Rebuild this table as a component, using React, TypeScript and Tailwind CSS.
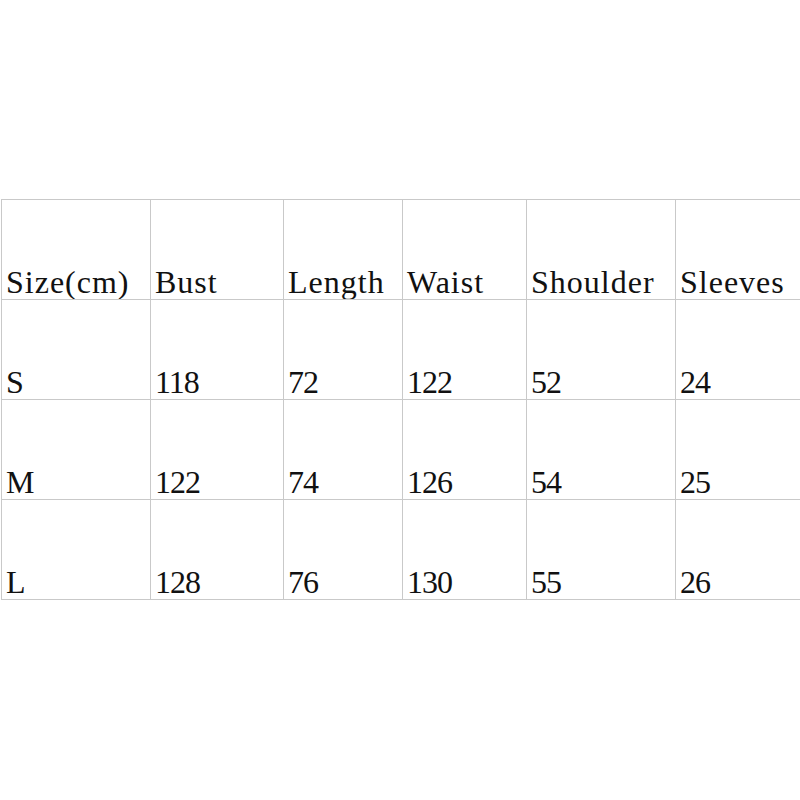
import React from "react";

const headers = ["Size(cm)", "Bust", "Length", "Waist", "Shoulder", "Sleeves"];

const rows = [
  ["S", "118", "72", "122", "52", "24"],
  ["M", "122", "74", "126", "54", "25"],
  ["L", "128", "76", "130", "55", "26"],
];

const Cell: React.FC<{ text: string; head: boolean; last: boolean }> = ({ text, head, last }) => (
  <div
    className={`h-[100px] border-l border-t border-[#c9c9c9] flex items-end pl-[4px] pb-[1px] ${
      last ? "border-b h-[101px]" : ""
    }`}
  >
    <span
      className={`text-[32px] leading-[32px] text-[#111] whitespace-nowrap ${
        head ? "tracking-[1px]" : "tracking-[-1px]"
      }`}
    >
      {text}
    </span>
  </div>
);

export default function App() {
  const all = [headers, ...rows];

  return (
    <div
      className="w-[800px] h-[800px] bg-white overflow-hidden pt-[199px] pl-[1px]"
      style={{ fontFamily: '"Liberation Serif", "DejaVu Serif", serif' }}
    >
      <div className="grid grid-cols-[149px_133px_119px_124px_149px_200px] w-max">
        {all.map((row, r) =>
          row.map((text, c) => (
            <Cell key={`${r}-${c}`} text={text} head={r === 0} last={r === all.length - 1} />
          ))
        )}
      </div>
    </div>
  );
}
